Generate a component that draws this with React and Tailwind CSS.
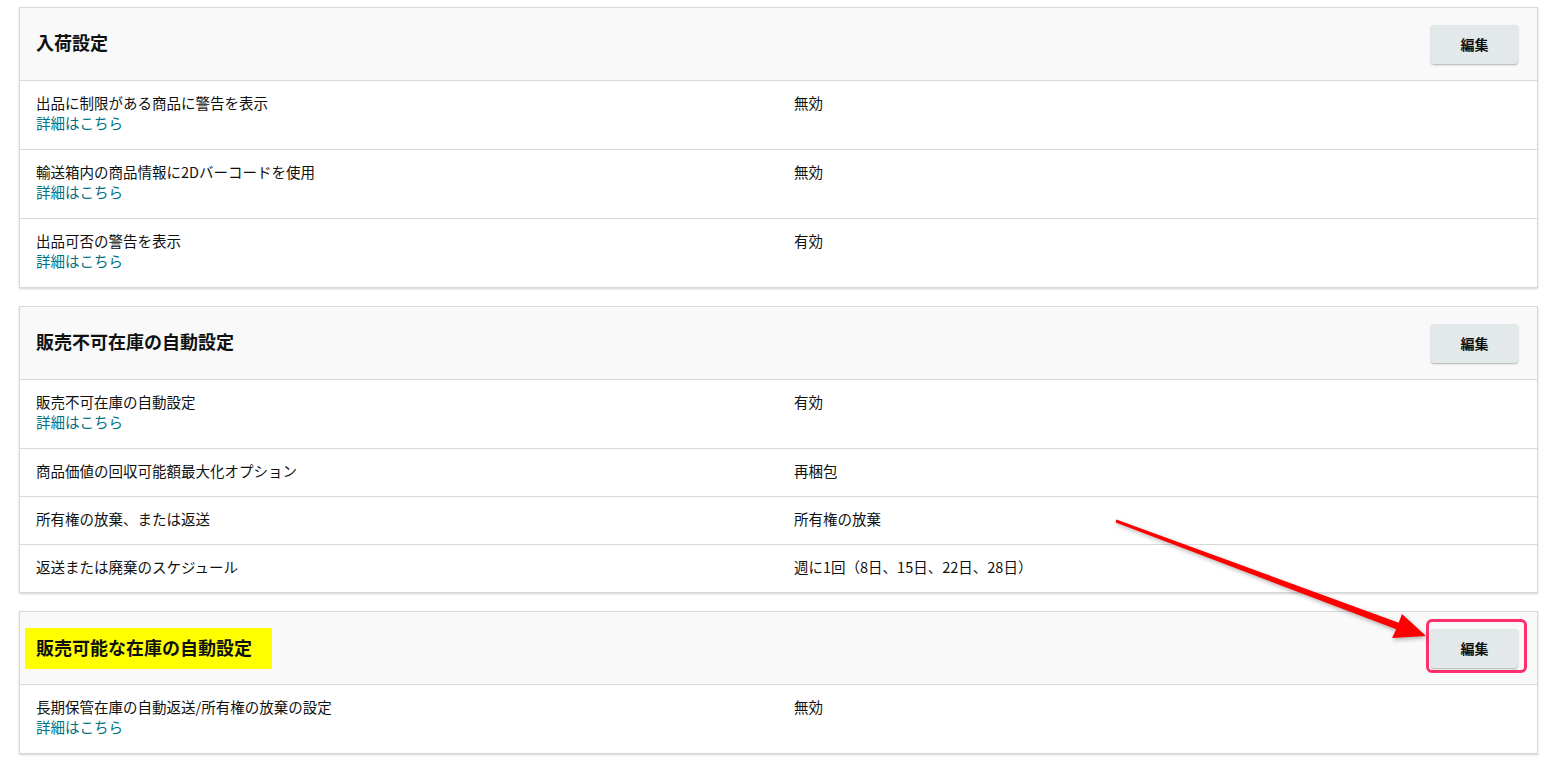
import React from 'react';

const sections = [
  {
    title: '入荷設定',
    rows: [
      { label: '出品に制限がある商品に警告を表示', value: '無効', link: true },
      { label: '輸送箱内の商品情報に2Dバーコードを使用', value: '無効', link: true },
      { label: '出品可否の警告を表示', value: '有効', link: true },
    ],
  },
  {
    title: '販売不可在庫の自動設定',
    rows: [
      { label: '販売不可在庫の自動設定', value: '有効', link: true },
      { label: '商品価値の回収可能額最大化オプション', value: '再梱包' },
      { label: '所有権の放棄、または返送', value: '所有権の放棄' },
      { label: '返送または廃棄のスケジュール', value: '週に1回（8日、15日、22日、28日）' },
    ],
  },
  {
    title: '販売可能な在庫の自動設定',
    highlight: true,
    rows: [
      { label: '長期保管在庫の自動返送/所有権の放棄の設定', value: '無効', link: true },
    ],
  },
];

const EditButton = ({ marked }) => (
  <div className="relative">
    {marked && (
      <div className="absolute left-[-5px] top-[-10px] right-[-9px] bottom-[-5px] rounded-[6px] border-[3px] border-[#ff2e6c]"></div>
    )}
    <button className="relative w-[87px] h-[39px] rounded-[3px] bg-[#e3e9eb] text-[14px] font-bold text-[#0f1111] shadow-[0_1px_2px_rgba(0,0,0,0.3)]">
      編集
    </button>
  </div>
);

const Section = ({ section }) => (
  <div className="border border-[#d5d9d9] bg-white shadow-[0_1px_2px_rgba(0,0,0,0.18)]">
    <div className="flex h-[73px] items-center justify-between border-b border-[#d5d9d9] bg-[#f9f9f9] pl-[16px] pr-[19px]">
      {section.highlight ? (
        <h2 className="ml-[-11px] bg-[#ffff00] pl-[11px] pr-[20px] pb-[2px] leading-[39px] text-[18px] font-bold text-[#0f1111]">
          {section.title}
        </h2>
      ) : (
        <h2 className="relative top-[-2px] text-[18px] font-bold text-[#0f1111]">{section.title}</h2>
      )}
      <EditButton marked={section.highlight} />
    </div>
    {section.rows.map((row, i) => (
      <div
        key={row.label}
        className={`flex pl-[16px] pt-[12px] text-[14.5px] leading-[20px] text-[#0f1111] ${
          row.link ? 'pb-[16px]' : 'pb-[15px]'
        } ${i < section.rows.length - 1 ? 'border-b border-[#d5d9d9]' : ''}`}
      >
        <div className="w-[758px]">
          <div>{row.label}</div>
          {row.link && <div className="text-[#007185]">詳細はこちら</div>}
        </div>
        <div>{row.value}</div>
      </div>
    ))}
  </div>
);

export default function App() {
  return (
    <div
      className="relative min-h-[766px] bg-white pl-[19px] pr-[13px] pt-[7px]"
      style={{ fontFamily: '"Noto Sans CJK JP", "Noto Sans", sans-serif' }}
    >
      <div className="flex flex-col gap-[18px]">
        {sections.map((s) => (
          <Section key={s.title} section={s} />
        ))}
      </div>
      <svg
        className="pointer-events-none absolute left-0 top-0"
        width="1551"
        height="766"
        viewBox="0 0 1551 766"
      >
        <polygon
          points="1116.3,519.5 1398.7,622.7 1402,614 1426,636 1392,638 1396.3,629.3 1115.7,522.5"
          fill="#ff0000"
          style={{ filter: 'drop-shadow(1px 2px 2px rgba(0,0,0,0.3))' }}
        />
      </svg>
    </div>
  );
}
